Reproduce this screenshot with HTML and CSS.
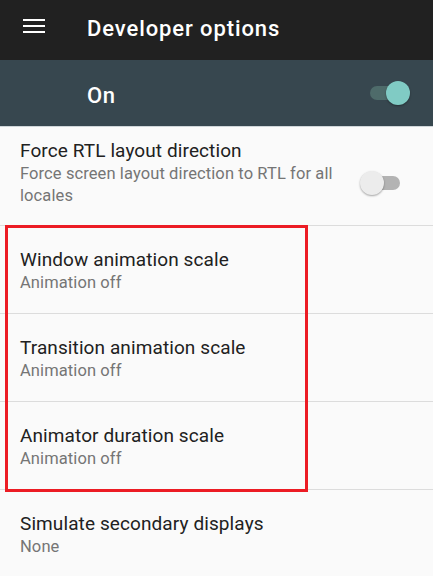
FILE: index.html
```html
<!DOCTYPE html>
<html lang="en">
<head>
    <meta charset="UTF-8">
    <meta name="viewport" content="width=device-width, initial-scale=1.0">
    <title>Developer options</title>
    <link rel="stylesheet" href="styles.css">
</head>
<body>
    <header class="app-bar">
        <svg class="menu-icon" width="22" height="14" viewBox="0 0 22 14">
            <rect x="0" y="0" width="22" height="2" fill="#fff"/>
            <rect x="0" y="6" width="22" height="2" fill="#fff"/>
            <rect x="0" y="12" width="22" height="2" fill="#fff"/>
        </svg>
        <h1>Developer options</h1>
    </header>

    <div class="master-switch">
        <span class="master-label">On</span>
        <span class="toggle on"><span class="track"></span><span class="thumb"></span></span>
    </div>

    <main class="prefs">
        <div class="pref first">
            <div class="pref-text">
                <div class="pref-title">Force RTL layout direction</div>
                <div class="pref-summary">Force screen layout direction to RTL for all locales</div>
            </div>
            <span class="toggle off"><span class="track"></span><span class="thumb"></span></span>
        </div>
        <div class="pref">
            <div class="pref-text">
                <div class="pref-title">Window animation scale</div>
                <div class="pref-summary">Animation off</div>
            </div>
        </div>
        <div class="pref">
            <div class="pref-text">
                <div class="pref-title">Transition animation scale</div>
                <div class="pref-summary">Animation off</div>
            </div>
        </div>
        <div class="pref">
            <div class="pref-text">
                <div class="pref-title">Animator duration scale</div>
                <div class="pref-summary">Animation off</div>
            </div>
        </div>
        <div class="pref">
            <div class="pref-text">
                <div class="pref-title">Simulate secondary displays</div>
                <div class="pref-summary">None</div>
            </div>
        </div>
        <div class="highlight"></div>
    </main>
</body>
</html>
```

FILE: styles.css
```css
body {
    margin: 0;
    font-family: 'Roboto', 'Liberation Sans', sans-serif;
    background: #FAFAFA;
    overflow: hidden;
}

.app-bar {
    display: flex;
    align-items: center;
    height: 60px;
    padding-left: 23px;
    background: #212121;
    color: #FFFFFF;
}

.menu-icon {
    display: block;
    margin-top: -8px;
}

.app-bar h1 {
    margin: -3px 0 0 42px;
    font-size: 22px;
    font-weight: 500;
    letter-spacing: 0.9px;
}

.master-switch {
    display: flex;
    align-items: center;
    justify-content: space-between;
    height: 66px;
    padding: 0 23px 0 87px;
    background: #37474F;
    border-bottom: 1px solid #CFD6D9;
}

.master-label {
    color: #FFFFFF;
    font-size: 22px;
    font-weight: 500;
    letter-spacing: 0.6px;
    margin-top: 4px;
}

.toggle {
    position: relative;
    display: block;
    width: 40px;
    height: 24px;
}

.toggle .track {
    position: absolute;
    top: 5px;
    width: 34px;
    height: 14px;
    border-radius: 7px;
}

.toggle .thumb {
    position: absolute;
    top: 0;
    width: 24px;
    height: 24px;
    border-radius: 50%;
    box-shadow: 0 1px 2px rgba(0, 0, 0, 0.35);
}

.toggle.on .track {
    left: 0;
    background: #4E6B6A;
}

.toggle.on .thumb {
    right: 0;
    background: #80CBC4;
}

.toggle.off .track {
    right: 0;
    background: #B3B3B3;
}

.toggle.off .thumb {
    left: 0;
    background: #ECECEC;
}

.prefs {
    position: relative;
}

.pref {
    display: flex;
    align-items: flex-start;
    justify-content: space-between;
    padding: 22px 33px 19px 20px;
    border-bottom: 1px solid #DCDCDC;
}

.pref.first {
    padding-top: 12px;
    padding-bottom: 18px;
}

.pref.first .toggle {
    margin-top: 32px;
}

.pref-text {
    max-width: 334px;
}

.pref-title {
    color: #212121;
    font-size: 19px;
    line-height: 24px;
    letter-spacing: 0.1px;
}

.pref-summary {
    color: #757575;
    font-size: 16.5px;
    line-height: 22px;
    letter-spacing: 0.1px;
}

.highlight {
    position: absolute;
    left: 5px;
    top: 98px;
    width: 297px;
    height: 261px;
    border: 3px solid #EC1C24;
}
```
